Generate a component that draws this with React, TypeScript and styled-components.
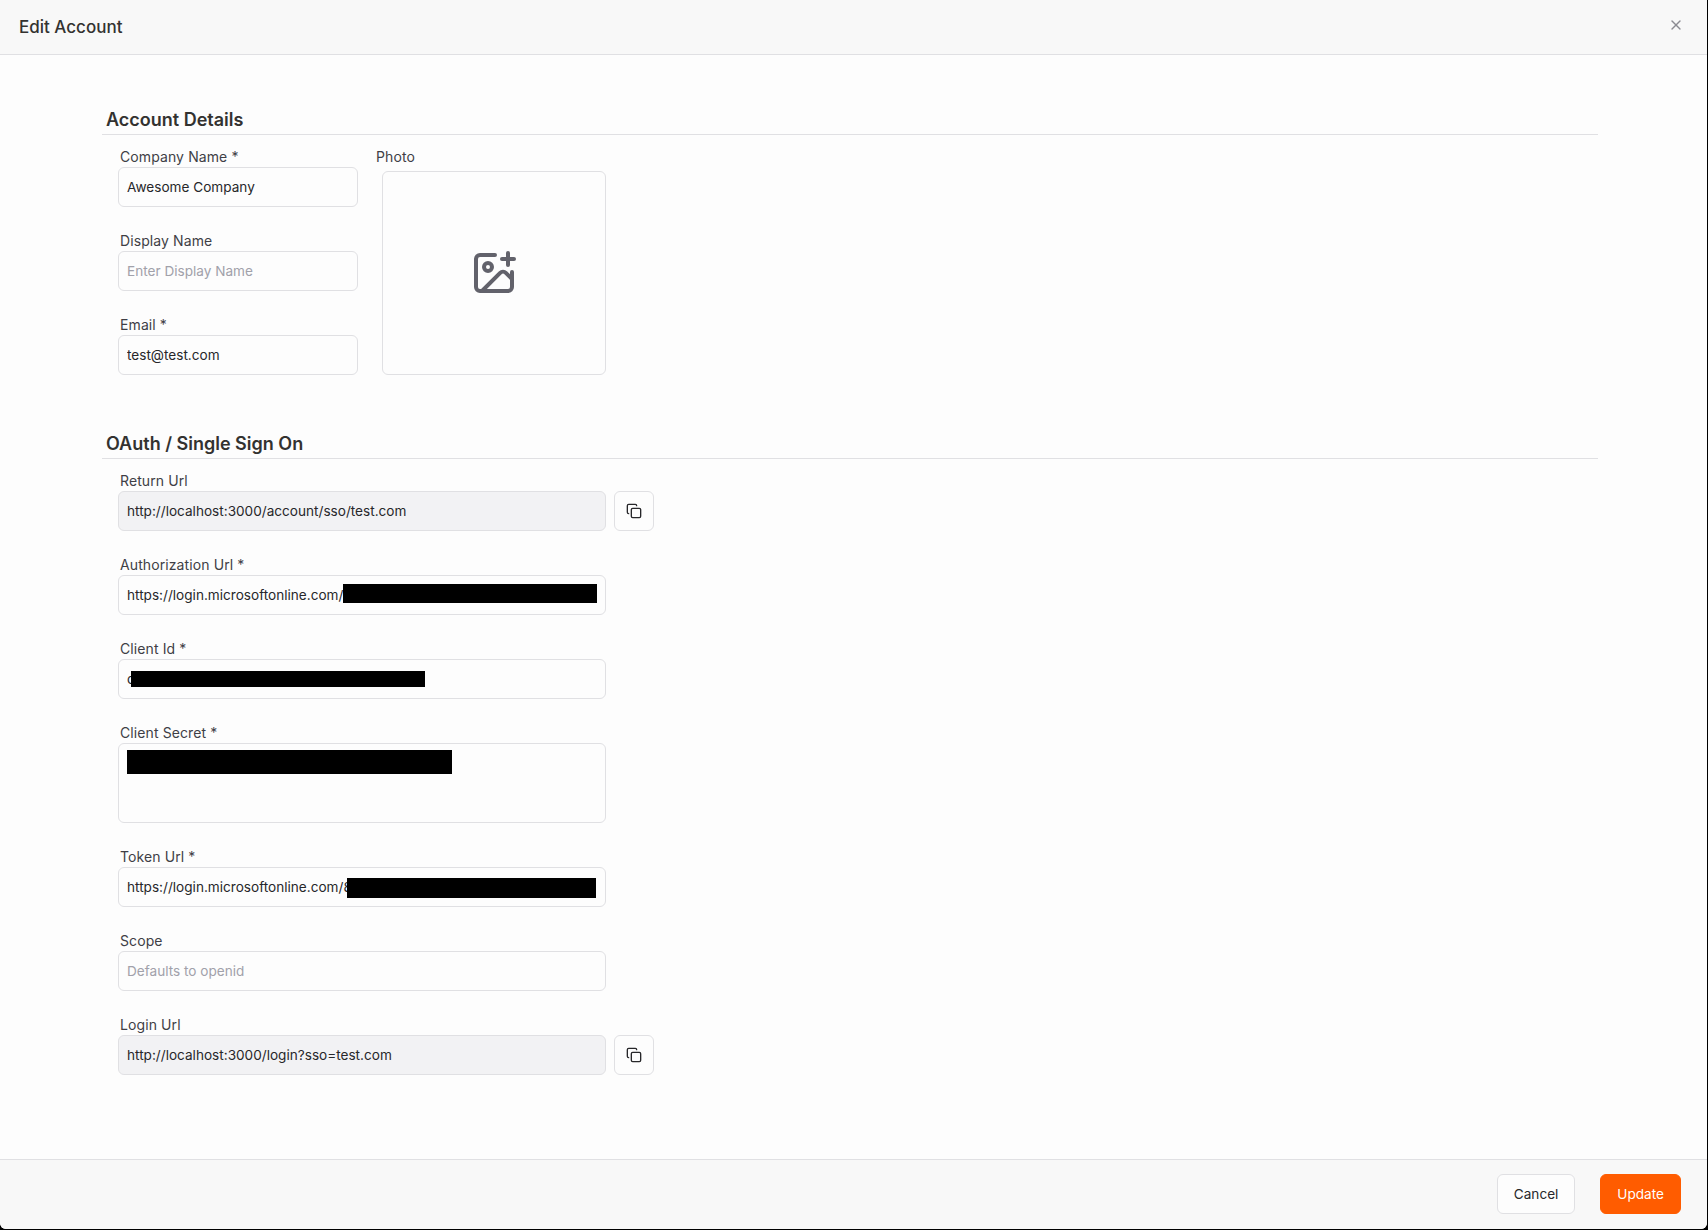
import React from "react";
import styled, { createGlobalStyle } from "styled-components";
import { Copy, ImagePlus, X } from "lucide-react";

const GlobalStyle = createGlobalStyle`
  html, body {
    margin: 0;
    padding: 0;
    background: #000;
  }
  * {
    box-sizing: border-box;
  }
`;

const Modal = styled.div`
  width: 1707px;
  height: 1229px;
  display: flex;
  flex-direction: column;
  background: #fdfdfd;
  border-radius: 0 0 6px 6px;
  overflow: hidden;
  font-family: Inter, "Liberation Sans", sans-serif;
  color: #27272a;
`;

const Header = styled.div`
  height: 55px;
  flex-shrink: 0;
  display: flex;
  align-items: center;
  justify-content: space-between;
  padding: 0 23px 0 19px;
  background: #f8f8f8;
  border-bottom: 1px solid #e0e0e3;
`;

const Title = styled.h1`
  margin: 0;
  font-size: 17px;
  font-weight: 500;
  color: #333230;
`;

const CloseButton = styled.button`
  display: flex;
  padding: 0;
  margin-bottom: 4px;
  border: 0;
  background: none;
  color: #8b8b92;
`;

const Body = styled.div`
  flex: 1;
  padding: 52px 109px 0 102px;
`;

const Section = styled.section`
  margin-bottom: 56px;
`;

const SectionTitle = styled.h2`
  margin: 0 0 12px;
  padding: 0 0 2px 4px;
  font-size: 18px;
  line-height: 25px;
  font-weight: 600;
  color: #333230;
  border-bottom: 1px solid #e0e0e3;
`;

const DetailsRow = styled.div`
  display: flex;
  gap: 18px;
  padding-left: 16px;
`;

const Column = styled.div`
  display: flex;
  flex-direction: column;
  gap: 24px;
`;

const Fields = styled.div`
  display: flex;
  flex-direction: column;
  gap: 24px;
  padding-left: 16px;
`;

const Field = styled.div`
  display: flex;
  flex-direction: column;
`;

const Label = styled.label`
  height: 20px;
  padding-left: 2px;
  font-size: 14px;
  line-height: 20px;
  letter-spacing: 0.1px;
  color: #3f3f46;
`;

const InputRow = styled.div`
  display: flex;
  gap: 8px;
`;

const Input = styled.input<{ $width: number }>`
  width: ${(p) => p.$width}px;
  height: 40px;
  padding: 0 8px;
  border: 1px solid #e0e0e3;
  border-radius: 6px;
  background: #fdfdfd;
  font-family: inherit;
  font-size: 13.6px;
  color: #27272a;
  &::placeholder {
    color: #a1a1aa;
    opacity: 1;
  }
  &:read-only {
    background: #f2f2f4;
  }
`;

const SecretBox = styled.div`
  width: 488px;
  height: 80px;
  padding: 6px 8px;
  border: 1px solid #e0e0e3;
  border-radius: 6px;
`;

const RedactedInput = styled.div`
  position: relative;
  width: 488px;
  height: 40px;
  display: flex;
  align-items: center;
  padding: 0 8px;
  border: 1px solid #e0e0e3;
  border-radius: 6px;
  font-size: 13.6px;
  color: #27272a;
  white-space: nowrap;
`;

const Redaction = styled.div<{ $left: number; $width: number; $top: number; $height: number }>`
  position: absolute;
  left: ${(p) => p.$left}px;
  top: ${(p) => p.$top}px;
  width: ${(p) => p.$width}px;
  height: ${(p) => p.$height}px;
  background: #000;
`;

const SecretBar = styled.div`
  width: 325px;
  height: 24px;
  background: #000;
`;

const CopyButton = styled.button`
  width: 40px;
  height: 40px;
  display: flex;
  align-items: center;
  justify-content: center;
  padding: 0;
  border: 1px solid #e0e0e3;
  border-radius: 6px;
  background: #fdfdfd;
  color: #27272a;
`;

const PhotoField = styled.div`
  display: flex;
  flex-direction: column;
`;

const PhotoLabel = styled.label`
  height: 24px;
  font-size: 14px;
  line-height: 20px;
  letter-spacing: 0.1px;
  color: #3f3f46;
`;

const PhotoBox = styled.div`
  width: 224px;
  height: 204px;
  margin-left: 6px;
  display: flex;
  align-items: center;
  justify-content: center;
  border: 1px solid #e0e0e3;
  border-radius: 6px;
  color: #62626b;
`;

const Footer = styled.div`
  height: 70px;
  flex-shrink: 0;
  display: flex;
  align-items: center;
  justify-content: flex-end;
  gap: 25px;
  padding: 0 26px 2px 0;
  background: #f8f8f8;
  border-top: 1px solid #e0e0e3;
`;

const Button = styled.button<{ $primary?: boolean }>`
  height: 40px;
  padding: 0 16px;
  border: 1px solid ${(p) => (p.$primary ? "#ff5c00" : "#e0e0e3")};
  border-radius: 6px;
  background: ${(p) => (p.$primary ? "#ff5c00" : "#fdfdfd")};
  color: ${(p) => (p.$primary ? "#fff" : "#27272a")};
  font-family: inherit;
  font-size: 13.6px;
`;

const App = () => {
  return (
    <>
      <GlobalStyle />
      <Modal>
        <Header>
          <Title>Edit Account</Title>
          <CloseButton>
            <X size={16} />
          </CloseButton>
        </Header>
        <Body>
          <Section>
            <SectionTitle>Account Details</SectionTitle>
            <DetailsRow>
              <Column>
                <Field>
                  <Label>Company Name *</Label>
                  <Input $width={240} defaultValue="Awesome Company" />
                </Field>
                <Field>
                  <Label>Display Name</Label>
                  <Input $width={240} placeholder="Enter Display Name" />
                </Field>
                <Field>
                  <Label>Email *</Label>
                  <Input $width={240} defaultValue="test@test.com" />
                </Field>
              </Column>
              <PhotoField>
                <PhotoLabel>Photo</PhotoLabel>
                <PhotoBox>
                  <ImagePlus size={48} strokeWidth={2} />
                </PhotoBox>
              </PhotoField>
            </DetailsRow>
          </Section>
          <Section>
            <SectionTitle>OAuth / Single Sign On</SectionTitle>
            <Fields>
              <Field>
                <Label>Return Url</Label>
                <InputRow>
                  <Input
                    $width={488}
                    readOnly
                    defaultValue="http://localhost:3000/account/sso/test.com"
                  />
                  <CopyButton>
                    <Copy size={16} />
                  </CopyButton>
                </InputRow>
              </Field>
              <Field>
                <Label>Authorization Url *</Label>
                <RedactedInput>
                  https://login.microsoftonline.com/
                  <Redaction $left={224} $top={8} $width={254} $height={19} />
                </RedactedInput>
              </Field>
              <Field>
                <Label>Client Id *</Label>
                <RedactedInput>
                  c
                  <Redaction $left={12} $top={11} $width={294} $height={16} />
                </RedactedInput>
              </Field>
              <Field>
                <Label>Client Secret *</Label>
                <SecretBox>
                  <SecretBar />
                </SecretBox>
              </Field>
              <Field>
                <Label>Token Url *</Label>
                <RedactedInput>
                  https://login.microsoftonline.com/8
                  <Redaction $left={228} $top={10} $width={249} $height={20} />
                </RedactedInput>
              </Field>
              <Field>
                <Label>Scope</Label>
                <Input $width={488} placeholder="Defaults to openid" />
              </Field>
              <Field>
                <Label>Login Url</Label>
                <InputRow>
                  <Input
                    $width={488}
                    readOnly
                    defaultValue="http://localhost:3000/login?sso=test.com"
                  />
                  <CopyButton>
                    <Copy size={16} />
                  </CopyButton>
                </InputRow>
              </Field>
            </Fields>
          </Section>
        </Body>
        <Footer>
          <Button>Cancel</Button>
          <Button $primary>Update</Button>
        </Footer>
      </Modal>
    </>
  );
};

export default App;
